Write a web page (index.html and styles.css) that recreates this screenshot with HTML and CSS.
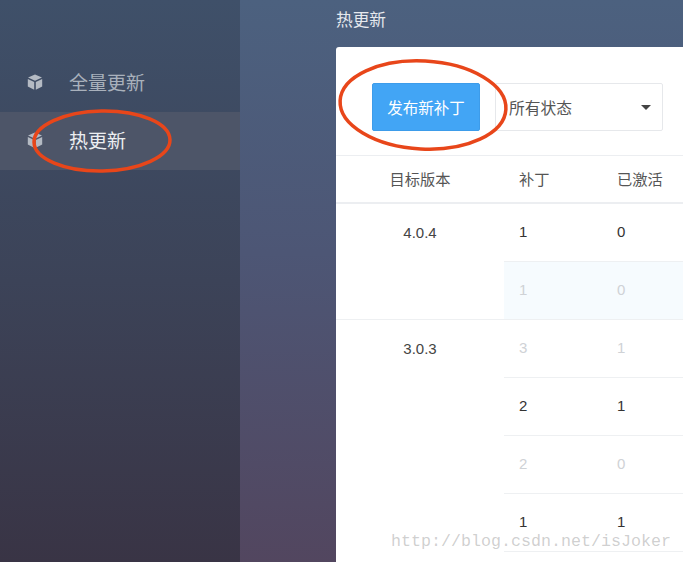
FILE: index.html
```html
<!DOCTYPE html>
<html lang="zh-CN">
<head>
    <meta charset="UTF-8">
    <meta name="viewport" content="width=device-width, initial-scale=1.0">
    <title>热更新</title>
    <link rel="stylesheet" href="styles.css">
</head>
<body>
    <div class="sidebar">
        <div class="menu">
            <div class="menu-item">
                <svg class="cube" viewBox="0 0 16 16"><path d="M8 0.5 L15 3.6 L8 6.8 L1 3.6 Z"/><path d="M0.8 5 L7.2 8 V15.8 L0.8 12.4 Z"/><path d="M15.2 5 L8.8 8 V15.8 L15.2 12.4 Z"/></svg>
                <span>全量更新</span>
            </div>
            <div class="menu-item active">
                <svg class="cube" viewBox="0 0 16 16"><path d="M8 0.5 L15 3.6 L8 6.8 L1 3.6 Z"/><path d="M0.8 5 L7.2 8 V15.8 L0.8 12.4 Z"/><path d="M15.2 5 L8.8 8 V15.8 L15.2 12.4 Z"/></svg>
                <span>热更新</span>
            </div>
        </div>
    </div>
    <div class="main">
        <div class="page-title">热更新</div>
        <div class="card">
            <div class="toolbar">
                <button class="btn">发布新补丁</button>
                <div class="select">
                    <span>所有状态</span>
                    <i class="caret"></i>
                </div>
            </div>
            <table class="patches">
                <thead>
                    <tr>
                        <th class="col-version">目标版本</th>
                        <th class="col-patch">补丁</th>
                        <th class="col-active">已激活</th>
                    </tr>
                </thead>
                <tbody>
                    <tr>
                        <td class="version" rowspan="2">4.0.4</td>
                        <td>1</td><td>0</td>
                    </tr>
                    <tr class="off hover">
                        <td>1</td><td>0</td>
                    </tr>
                    <tr class="off">
                        <td class="version" rowspan="5">3.0.3</td>
                        <td>3</td><td>1</td>
                    </tr>
                    <tr>
                        <td>2</td><td>1</td>
                    </tr>
                    <tr class="off">
                        <td>2</td><td>0</td>
                    </tr>
                    <tr>
                        <td>1</td><td>1</td>
                    </tr>
                    <tr>
                        <td></td><td></td>
                    </tr>
                </tbody>
            </table>
        </div>
    </div>

    <!-- hand drawn marks on top of the screenshot -->
    <svg class="marks" viewBox="0 0 683 562">
        <ellipse cx="102" cy="141" rx="68" ry="30" transform="rotate(-1 102 141)"/>
        <ellipse cx="423" cy="105" rx="83" ry="44" transform="rotate(3 423 105)"/>
    </svg>
    <div class="watermark">http://blog.csdn.net/isJoker</div>
</body>
</html>
```

FILE: styles.css
```css
* {
    box-sizing: border-box;
}
body {
    margin: 0;
    height: 562px;
    overflow: hidden;
    display: flex;
    font-family: "Liberation Sans", "Noto Sans CJK SC", sans-serif;
    background: linear-gradient(180deg, #4c617f 0%, #4d5675 45%, #52465f 100%);
}
.sidebar {
    width: 240px;
    height: 100%;
    flex-shrink: 0;
    padding-top: 54px;
    background: linear-gradient(180deg, #3f5069 0%, #3c4358 50%, #393445 100%);
}
.menu-item {
    height: 58px;
    display: flex;
    align-items: center;
    padding-left: 27px;
    padding-bottom: 3px;
    font-size: 19px;
    color: #a9b1bc;
}
.menu-item.active {
    background: #4d5568;
    color: #eceef1;
}
.cube {
    width: 16px;
    height: 16px;
    margin-right: 26px;
    fill: #b4bac3;
}
.main {
    flex: 1;
    min-width: 0;
    padding-left: 96px;
}
.page-title {
    height: 47px;
    padding-top: 11px;
    font-size: 16.7px;
    line-height: 20px;
    color: #e6e9ee;
}
.card {
    background: #fff;
    border-radius: 3px 0 0 0;
    height: 515px;
    overflow: hidden;
}
.toolbar {
    height: 109px;
    display: flex;
    align-items: flex-start;
    padding: 36px 0 0 36px;
    border-bottom: 1px solid #eceef1;
}
.btn {
    width: 108px;
    height: 48px;
    background: #42a5f5;
    color: #fff;
    border: 1px solid #3d9cea;
    border-radius: 2px;
    font-family: inherit;
    font-size: 15.5px;
    padding: 0;
}
.select {
    width: 168px;
    height: 48px;
    margin-left: 15px;
    padding: 0 11px 0 13px;
    display: flex;
    align-items: center;
    justify-content: space-between;
    border: 1px solid #e6e8eb;
    border-radius: 2px;
    font-size: 15.75px;
    color: #555;
}
.caret {
    width: 0;
    height: 0;
    border-left: 5px solid transparent;
    border-right: 5px solid transparent;
    border-top: 5px solid #444;
}
.patches {
    width: 347px;
    border-collapse: collapse;
    table-layout: fixed;
    font-size: 15px;
}
.patches th {
    height: 47px;
    font-size: 15.25px;
    font-weight: normal;
    color: #555;
    text-align: left;
    padding: 0 0 3px 15px;
    border-bottom: 2px solid #eceef1;
}
.patches .col-version {
    width: 168px;
    padding-left: 0;
    text-align: center;
}
.patches .col-patch {
    width: 98px;
}
.patches td {
    height: 58px;
    padding: 0 0 2px 15px;
    color: #333;
    border-bottom: 1px solid #eef0f2;
}
.patches .version {
    padding: 20px 0 0;
    text-align: center;
    vertical-align: top;
    color: #444;
}
.patches .off td {
    color: #cfd2d6;
}
.patches .off .version {
    color: #444;
}
.patches .hover td {
    background: #f6fbfe;
}
.marks {
    position: absolute;
    left: 0;
    top: 0;
    width: 683px;
    height: 562px;
    fill: none;
    stroke: #e8461a;
    stroke-width: 3.5;
}
.watermark {
    position: absolute;
    left: 391px;
    top: 531px;
    font-family: "Liberation Mono", monospace;
    font-size: 16.67px;
    line-height: 22px;
    color: rgba(120, 120, 120, 0.36);
    white-space: nowrap;
}
```
